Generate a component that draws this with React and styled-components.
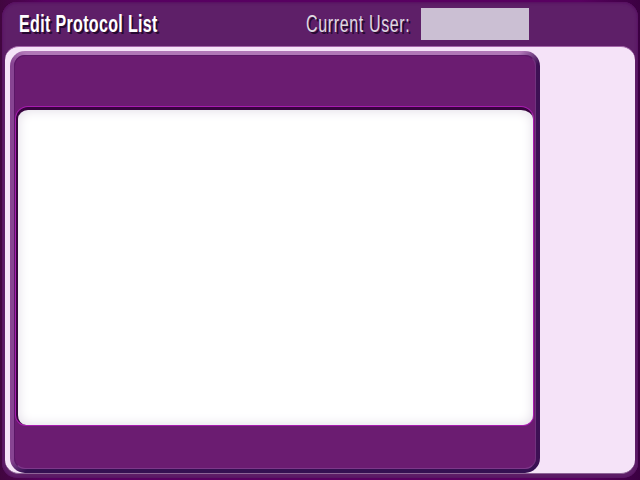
import React from 'react';
import styled, { createGlobalStyle } from 'styled-components';

const PageStyle = createGlobalStyle`
  * { box-sizing: border-box; }
  html, body { margin: 0; padding: 0; overflow: hidden; }
`;

const Screen = styled.main`
  width: 640px;
  height: 480px;
  padding: 2px;
  background: linear-gradient(90deg, #41063f 0, #570061 45px, #590061 580px, #3b0041 640px);
`;

const Frame = styled.div`
  height: 476px;
  padding: 0 3px 4px;
  border-radius: 15px;
  background: #5e1f68;
  box-shadow: inset 0 1px 1px #591262, inset 0 0 3px 1px #571263;
`;

const Header = styled.header`
  display: flex;
  height: 44px;
  padding: 6px 0 0 14px;
  font-family: 'Liberation Sans', sans-serif;
  white-space: nowrap;
`;

const HeaderCell = styled.div`
  width: ${p => p.$width}px;
  flex: none;
`;

const Label = styled.span`
  display: inline-block;
  transform: scaleX(${p => p.$stretch});
  transform-origin: left top;
  font-size: 24.5px;
  line-height: 31px;
  font-weight: ${p => p.$weight};
  letter-spacing: ${p => p.$spacing}px;
  color: ${p => p.$color};
  text-shadow: 3px 2px 0 #260a30;
`;

const UserField = styled.div`
  width: 108px;
  height: 32px;
  background: #cbbfd3;
`;

const Workspace = styled.section`
  height: 428px;
  padding: 4px 0 0 5px;
  border-top: 1px solid #a466aa;
  border-bottom: 1px solid #8e6497;
  border-radius: 14px;
  background: #f5e3f8;
`;

const Bezel = styled.div`
  width: 530px;
  height: 422px;
  border: 4px solid transparent;
  border-radius: 15px;
  background:
    linear-gradient(#6b1c71, #6b1c71) padding-box,
    conic-gradient(
      #b177b8 0deg 49.5deg, #3d1054 53deg 127deg,
      #351052 129deg 230deg, #874492 233deg 307deg, #b177b8 310deg
    ) border-box;
`;

const Panel = styled.div`
  display: flex;
  flex-direction: column;
  height: 414px;
  padding: 51px 1px 43px 2px;
  border: 1px solid;
  border-color: #5b1767 #71317d #7d398a #5b1767;
  border-radius: 11px;
`;

const List = styled.div`
  flex: 1;
  border-top: 3px solid #38033f;
  border-left: 2px solid #38033f;
  border-radius: 12px 12px 10px 10px;
  background: white;
  box-shadow: 0 0 0 1px #a71caf, inset 0 0 12px #dfd9e4;
  margin: 0 1px 0 -1px;
`;

export default function App() {
  return (
    <>
      <PageStyle />
      <Screen>
        <Frame>
          <Header>
            <HeaderCell $width={287}>
              <Label $weight={700} $color="#fff" $stretch={0.655} $spacing={0.5}>Edit Protocol List</Label>
            </HeaderCell>
            <HeaderCell $width={115}>
              <Label $weight={400} $color="#dfd8e0" $stretch={0.655} $spacing={0.95}>Current User:</Label>
            </HeaderCell>
            <UserField />
          </Header>
          <Workspace>
            <Bezel>
              <Panel><List /></Panel>
            </Bezel>
          </Workspace>
        </Frame>
      </Screen>
    </>
  );
}
